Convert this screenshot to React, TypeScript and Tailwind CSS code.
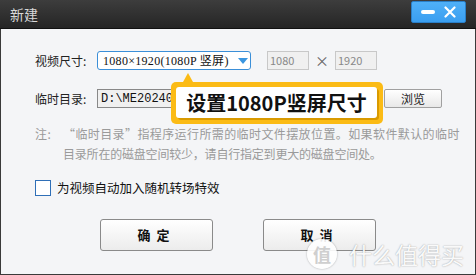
import React from 'react';

const cjk = { fontFamily: '"Microsoft YaHei", "Noto Sans CJK SC", sans-serif' };
const serif = { fontFamily: '"SimSun", "Liberation Serif", "Noto Sans CJK SC", serif' };
const mono = { fontFamily: '"Liberation Mono", "Noto Sans CJK SC", monospace' };

function TitleBar() {
  return (
    <div className="relative flex h-[29px] items-center bg-gradient-to-b from-[#3d3d3d] to-[#252525] pl-[10px] border-b border-[#111]">
      <span className="text-[14px] text-[#d8d8d8]" style={cjk}>新建</span>
      <div className="absolute right-[10px] top-[1px] flex h-[22px] w-[55px] items-center justify-around rounded-[2px] border border-[#2a7fc8] bg-gradient-to-b from-[#4fb0f8] to-[#3a9ef0] px-[4px]">
        <span className="block h-[4px] w-[14px] rounded-full bg-white" />
        <svg width="12" height="12" viewBox="0 0 12 12">
          <path d="M1.5 1.5 L10.5 10.5 M10.5 1.5 L1.5 10.5" stroke="#fff" strokeWidth="2.2" strokeLinecap="round" />
        </svg>
      </div>
    </div>
  );
}

function Callout() {
  return (
    <div className="absolute left-[170px] top-[53px]">
      <svg className="absolute left-[12px] top-[-10px]" width="10" height="10" viewBox="0 0 10 10">
        <path d="M5 1 L10 10 L0 10 Z" fill="#fbbb15" />
      </svg>
      <div className="rounded-[5px] bg-[#fbbb15] p-[5px] pr-[6px] pb-[6px]">
        <div className="flex h-[31px] w-[201px] items-center justify-center rounded-[3px] bg-white shadow-[2px_2px_0_#d99a00]">
          <span className="text-[20px] font-bold text-[#111] leading-none" style={cjk}>设置1080P竖屏尺寸</span>
        </div>
      </div>
    </div>
  );
}

export default function App() {
  return (
    <div className="w-[476px] h-[275px] overflow-hidden bg-[#2a2a2a]">
      <TitleBar />
      <div className="relative flex h-[246px] flex-col border-x border-b border-[#3a3a3a] bg-[#f4f5f7] pl-[34px] pt-[22px]" style={cjk}>
        {/* size row */}
        <div className="flex h-[19px] items-center">
          <span className="w-[62px] text-[12px] text-[#222]">视频尺寸:</span>
          <div className="flex h-[19px] w-[154px] items-center justify-between rounded-[3px] border border-[#3b8fd8] bg-white pl-[5px] pr-[2px]">
            <span className="text-[12px] text-[#111] leading-none tracking-[0.3px]" style={serif}>1080×1920(1080P 竖屏)</span>
            <svg width="10" height="6" viewBox="0 0 10 6">
              <path d="M0 0 L10 0 L5 6 Z" fill="#3a96e0" />
            </svg>
          </div>
          <div className="ml-[16px] flex h-[19px] w-[42px] items-center border border-[#c8c8c8] bg-[#f0f0f0] pl-[2px] text-[11px] text-[#888]">1080</div>
          <span className="mx-[6px] text-[14px] text-[#666]">×</span>
          <div className="flex h-[19px] w-[42px] items-center border border-[#c8c8c8] bg-[#f0f0f0] pl-[2px] text-[11px] text-[#888]">1920</div>
        </div>

        {/* temp dir row */}
        <div className="mt-[19px] flex h-[19px] items-center">
          <span className="w-[62px] text-[12px] text-[#222]">临时目录:</span>
          <div className="flex h-[19px] w-[281px] items-center overflow-hidden border border-[#888] bg-[#f0f0f0] pl-[3px]">
            <span className="text-[12px] text-[#111] whitespace-nowrap" style={mono}>D:\ME20240708</span>
          </div>
          <button className="ml-[6px] h-[19px] w-[58px] rounded-[2px] border border-[#a0a0a0] bg-gradient-to-b from-white to-[#e8e8e8] text-[12px] text-[#222] leading-none">浏览</button>
        </div>

        {/* note */}
        <div className="mt-[16px] flex text-[12px] leading-[20px] text-[#9a9a9a] tracking-[0.4px]">
          <span className="w-[28px] shrink-0">注:</span>
          <div className="w-[385px]">
            <div className="whitespace-nowrap">“临时目录”指程序运行所需的临时文件摆放位置。如果软件默认的临时</div>
            <div className="whitespace-nowrap tracking-[-0.2px]">目录所在的磁盘空间较少，请自行指定到更大的磁盘空间处。</div>
          </div>
        </div>

        {/* checkbox */}
        <div className="mt-[15px] flex items-center">
          <span className="block h-[16px] w-[16px] border border-[#2f6fb7] bg-white" />
          <span className="ml-[6px] text-[12.5px] text-[#111]">为视频自动加入随机转场特效</span>
        </div>

        {/* buttons */}
        <div className="mt-[21px] flex pl-[65px]">
          <button className="h-[32px] w-[113px] rounded-[3px] border border-[#8a8a8a] bg-gradient-to-b from-white to-[#ececec] text-[13px] font-bold text-[#111] tracking-[6px]">确定</button>
          <button className="ml-[50px] h-[32px] w-[113px] rounded-[3px] border border-[#8a8a8a] bg-gradient-to-b from-white to-[#ececec] text-[13px] font-bold text-[#111] tracking-[6px]">取消</button>
        </div>

        <Callout />

        {/* watermark */}
        <div className="pointer-events-none absolute left-[306px] top-[210px] flex items-center">
          <div className="flex h-[30px] w-[30px] items-center justify-center rounded-full bg-white/90 shadow-[0_0_2px_rgba(0,0,0,0.35)]">
            <span className="text-[18px] font-bold text-[#cfcfcf] leading-none">值</span>
          </div>
          <span className="ml-[12px] text-[23px] text-white/95 leading-none [text-shadow:0_0_1.5px_rgba(0,0,0,0.4)]">什么值得买</span>
        </div>
      </div>
    </div>
  );
}
